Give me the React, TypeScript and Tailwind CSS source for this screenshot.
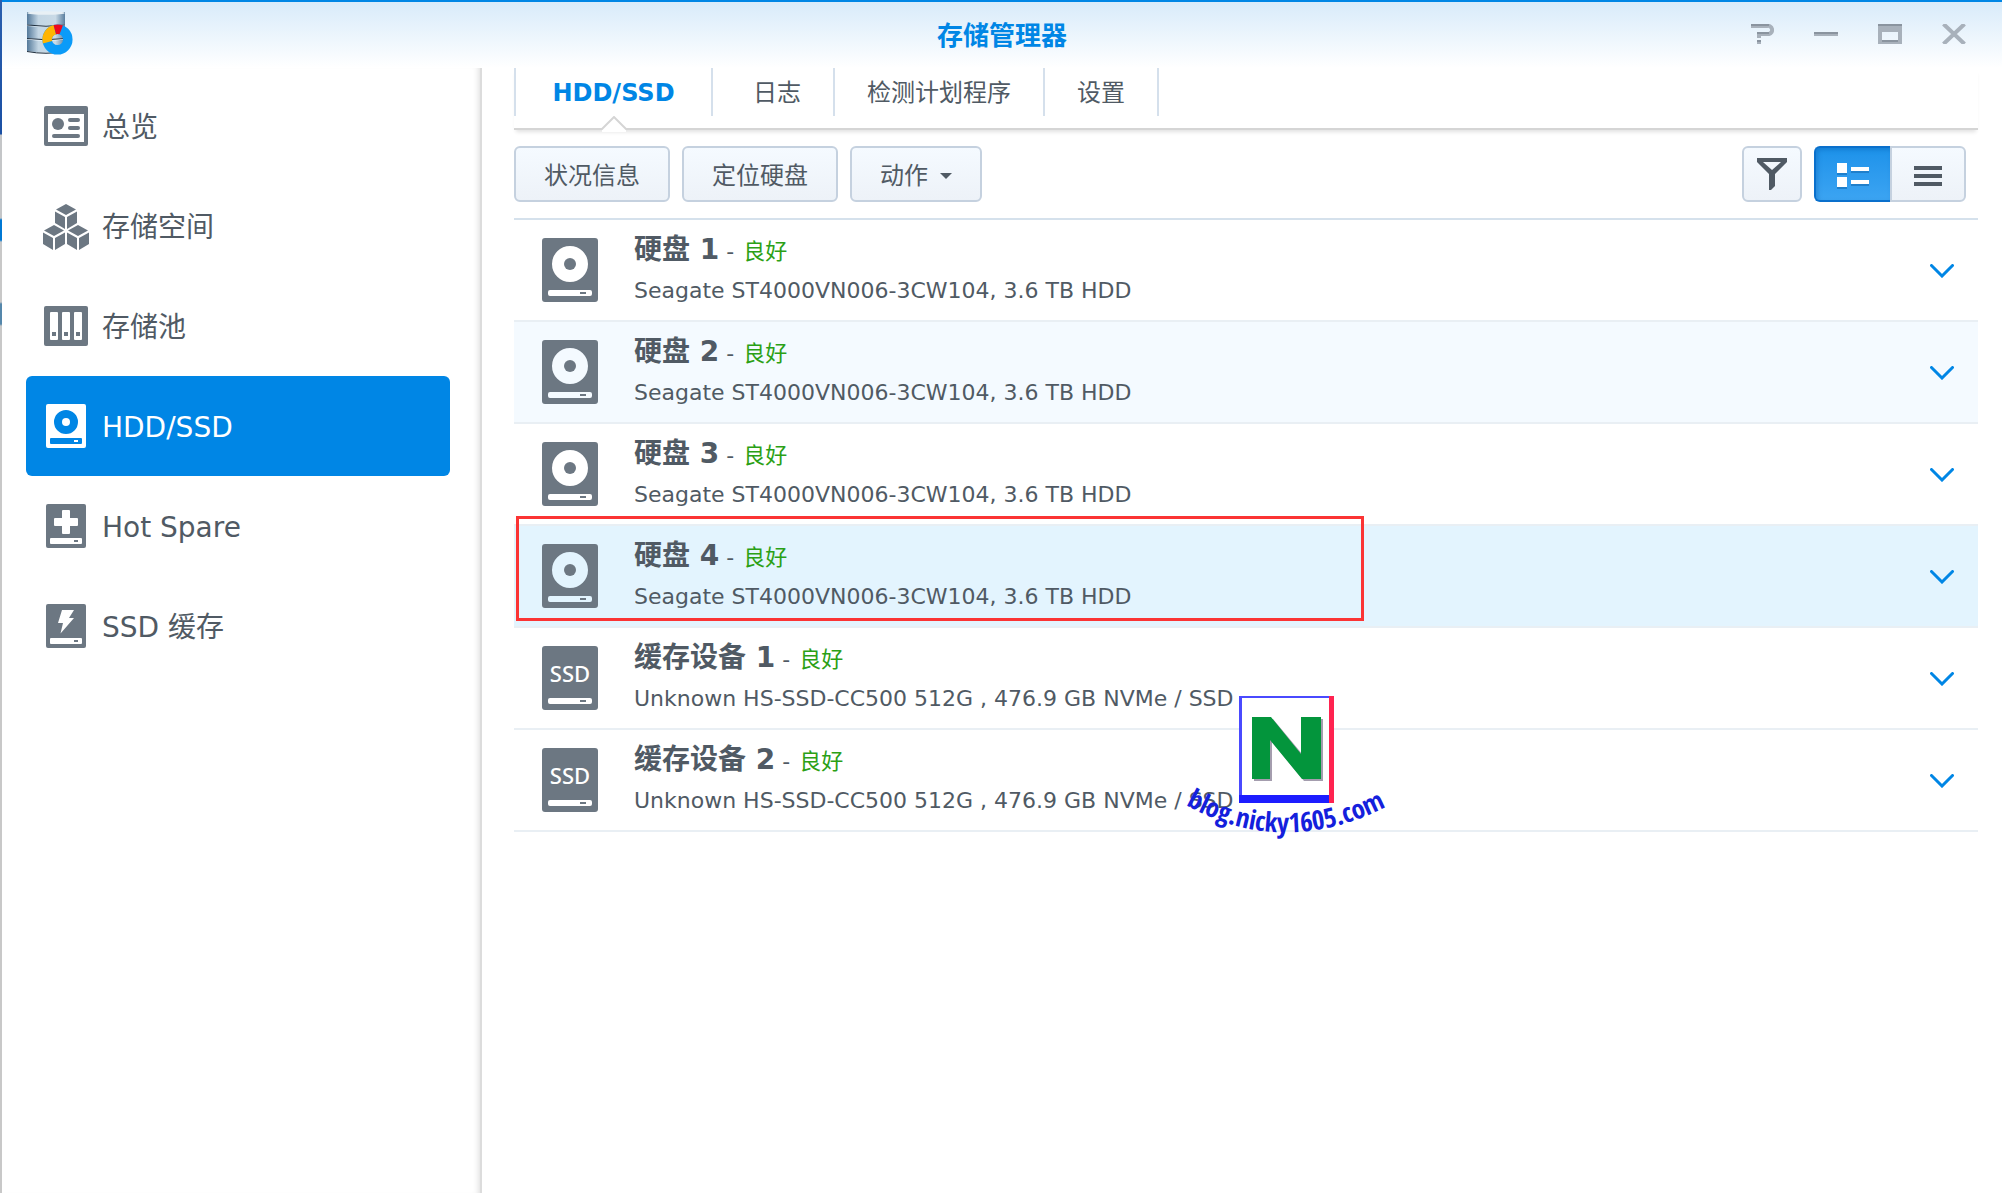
import React from "react";
import clsx from "clsx";

type IconProps = { className?: string };

function OverviewIcon() {
     return (
          <svg width="44" height="40" viewBox="0 0 44 40" fill="currentColor" aria-hidden="true">
               <path
                    fillRule="evenodd"
                    d="M2 0H42a2 2 0 0 1 2 2V38a2 2 0 0 1-2 2H2a2 2 0 0 1-2-2V2a2 2 0 0 1 2-2ZM4 8V36H40V8Z"
               />
               <circle cx="14" cy="18" r="6" />
               <rect x="24" y="12" width="12" height="4" rx="2" />
               <rect x="24" y="20" width="12" height="4" rx="2" />
               <rect x="8" y="28" width="28" height="4" rx="2" />
          </svg>
     );
}

const cube = "M11 0 21 5.5 11 11 1 5.5ZM0 7.5 10 13V25L0 19ZM12 13 22 7.5V19L12 25Z";

function VolumeIcon() {
     return (
          <svg width="46" height="48" viewBox="0 -2 46 48" className="shrink-0" fill="currentColor" aria-hidden="true">
               <path d={cube} transform="translate(12 0)" />
               <path d={cube} transform="translate(0 21)" />
               <path d={cube} transform="translate(24 21)" />
          </svg>
     );
}

function PoolIcon() {
     return (
          <svg width="44" height="40" viewBox="0 0 44 40" fill="currentColor" aria-hidden="true">
               <rect width="44" height="40" rx="2" />
               {[6, 18, 30].map((x) => (
                    <g key={x}>
                         <rect x={x} y="6" width="8" height="28" rx="1" fill="#fff" />
                         <rect x={x + 2} y="26" width="4" height="4" />
                    </g>
               ))}
          </svg>
     );
}

function SmallDiskIcon({ children }: { children?: React.ReactNode }) {
     return (
          <svg width="40" height="44" viewBox="0 0 40 44" aria-hidden="true">
               <rect width="40" height="44" rx="2" fill="currentColor" />
               <g fill="#fff">
                    {children}
                    <rect x="4" y="34" width="32" height="6" rx="1" />
               </g>
               <rect x="28" y="36" width="4" height="2" fill="currentColor" />
          </svg>
     );
}

function HddIcon() {
     return (
          <svg width="40" height="44" viewBox="0 0 40 44" fill="currentColor" aria-hidden="true">
               <path
                    fillRule="evenodd"
                    d="M2 0H38a2 2 0 0 1 2 2V42a2 2 0 0 1-2 2H2a2 2 0 0 1-2-2V2a2 2 0 0 1 2-2ZM20 6a12 12 0 1 0 0 24a12 12 0 1 0 0-24ZM5 34a1 1 0 0 0-1 1v4a1 1 0 0 0 1 1h30a1 1 0 0 0 1-1v-4a1 1 0 0 0-1-1Z"
               />
               <circle cx="20" cy="18" r="4" />
               <rect x="28" y="36" width="4" height="2" />
          </svg>
     );
}

function HotSpareIcon() {
     return (
          <SmallDiskIcon>
               <path d="M17 6h6a1 1 0 0 1 1 1v7h7a1 1 0 0 1 1 1v6a1 1 0 0 1-1 1h-7v7a1 1 0 0 1-1 1h-6a1 1 0 0 1-1-1v-7H9a1 1 0 0 1-1-1v-6a1 1 0 0 1 1-1h7V7a1 1 0 0 1 1-1Z" />
          </SmallDiskIcon>
     );
}

function SsdCacheIcon() {
     return (
          <SmallDiskIcon>
               <path d="M16 6H28L23 14H28L14.5 29.5L17 19H12Z" />
          </SmallDiskIcon>
     );
}

function DriveIcon({ type }: { type: string }) {
     return (
          <svg width="56" height="64" viewBox="0 0 56 64" className="shrink-0 text-[#6c7782]" fill="currentColor" aria-hidden="true">
               {type === "hdd" ? (
                    <>
                         <path
                              fillRule="evenodd"
                              d="M3 0H53a3 3 0 0 1 3 3V61a3 3 0 0 1-3 3H3a3 3 0 0 1-3-3V3a3 3 0 0 1 3-3ZM28 8a18 18 0 1 0 0 36a18 18 0 1 0 0-36ZM8 52a2 2 0 0 0-2 2v2a2 2 0 0 0 2 2h40a2 2 0 0 0 2-2v-2a2 2 0 0 0-2-2Z"
                         />
                         <circle cx="28" cy="26" r="6" />
                    </>
               ) : (
                    <>
                         <rect width="56" height="64" rx="3" />
                         <text x="28" y="36" textAnchor="middle" fill="#fff" className="font-['Noto_Sans',sans-serif] text-[22px] font-medium">
                              SSD
                         </text>
                         <rect x="6" y="52" width="44" height="6" rx="2" fill="#fff" />
                    </>
               )}
               <rect x="38" y="54" width="6" height="2" />
          </svg>
     );
}

function AppLogo() {
     return (
          <svg width="48" height="46" viewBox="0 0 48 46" aria-hidden="true">
               <defs>
                    <linearGradient id="metal" x1="0" x2="1" y1="0" y2="0">
                         <stop offset="0" stopColor="#54799a" />
                         <stop offset="0.3" stopColor="#c3d6e4" />
                         <stop offset="0.75" stopColor="#c9dae6" />
                         <stop offset="1" stopColor="#5b7f9f" />
                    </linearGradient>
               </defs>
               <path d="M1 1V13.5Q20 16 39 13.5V1Z" fill="url(#metal)" />
               <path d="M1 15V27Q20 29.5 39 27V15Q20 17 1 15Z" fill="url(#metal)" />
               <path d="M1 28.5V40Q20 43.5 39 40V28.5Q20 31 1 28.5Z" fill="url(#metal)" />
               <path d="M1 14Q20 16.5 39 14M1 27.5Q20 30 39 27.5M1 40.5Q20 44 39 40.5" fill="none" stroke="#1f2f3e" />
               <ellipse cx="20" cy="2" rx="19" ry="1.8" fill="#e8f0f5" />
               {/* Usage ring, with the cylinder showing through its middle */}
               <g fill="none" strokeWidth="9.5">
                    <circle cx="31.5" cy="28.5" r="10.3" stroke="#0b9bf8" />
                    <path d="M21.5 31.2A10.3 10.3 0 0 1 28.8 18.6" stroke="#ffb400" />
                    <path d="M28.8 18.6A10.3 10.3 0 0 1 35.2 18.9" stroke="#ee0a1e" />
               </g>
          </svg>
     );
}

function FilterIcon() {
     return (
          <svg width="30" height="32" viewBox="0 0 30 32" fill="#505a64" aria-hidden="true">
               <path fillRule="evenodd" d="M0 0H30V4L18 16V28L14 32H12V16L0 4ZM6 4 15 12 24 4Z" />
          </svg>
     );
}

function DetailIcon() {
     return (
          <svg width="32" height="26" viewBox="0 0 32 26" aria-hidden="true">
               <path d="M0 2h10v10H0ZM0 16h10v10H0ZM14 6h18v4H14ZM14 19h18v4H14Z" fill="#1f7fcb" />
               <path d="M0 0h10v10H0ZM0 14h10v10H0ZM14 4h18v4H14ZM14 17h18v4H14Z" fill="#fff" />
          </svg>
     );
}

function ListIcon() {
     return (
          <svg width="28" height="20" viewBox="0 0 28 20" fill="#505a64" aria-hidden="true">
               <path d="M0 0h28v4H0ZM0 8h28v4H0ZM0 16h28v4H0Z" />
          </svg>
     );
}

function ChevronIcon({ className }: IconProps) {
     return (
          <svg width="24" height="14" viewBox="0 0 24 14" className={className} aria-hidden="true">
               <path d="M1.5 1.5 12 12 22.5 1.5" fill="none" stroke="#0086e5" strokeWidth="3" strokeLinecap="round" />
          </svg>
     );
}

// Each glyph is drawn twice: the light body, then a dark top edge
const windowControls = [
     { label: "帮助", d: "M1 2H17A4 4 0 0 1 19 10H9V14M9 16v4", dark: "M1 1H19M7 9H19M7 17H11" },
     { label: "最小化", d: "M0 10H24", dark: "M0 9H24" },
     { label: "最大化", d: "M2 2V18H22V2ZM0 6H24", dark: "M0 1H24M4 17H20" },
     { label: "关闭", d: "M1.5 0 22.5 20M22.5 0 1.5 20", dark: "" },
];

const navItems = [
     { name: "总览", Icon: OverviewIcon },
     { name: "存储空间", Icon: VolumeIcon },
     { name: "存储池", Icon: PoolIcon },
     { name: "HDD/SSD", Icon: HddIcon, active: true },
     { name: "Hot Spare", Icon: HotSpareIcon },
     { name: "SSD 缓存", Icon: SsdCacheIcon },
];

const tabs = ["日志", "检测计划程序", "设置"];

const disks = [
     { name: "硬盘 1", type: "hdd", model: "Seagate ST4000VN006-3CW104, 3.6 TB HDD" },
     { name: "硬盘 2", type: "hdd", model: "Seagate ST4000VN006-3CW104, 3.6 TB HDD", striped: true },
     { name: "硬盘 3", type: "hdd", model: "Seagate ST4000VN006-3CW104, 3.6 TB HDD" },
     { name: "硬盘 4", type: "hdd", model: "Seagate ST4000VN006-3CW104, 3.6 TB HDD", selected: true },
     { name: "缓存设备 1", type: "ssd", model: "Unknown HS-SSD-CC500 512G , 476.9 GB NVMe / SSD" },
     { name: "缓存设备 2", type: "ssd", model: "Unknown HS-SSD-CC500 512G , 476.9 GB NVMe / SSD" },
];

const buttonClass =
     "flex h-14 items-center justify-center rounded-md border-2 border-[#c5d1df] bg-linear-to-b from-[#f5faff] to-[#edf2f8]";

function Watermark() {
     return (
          <svg
               width="204"
               height="156"
               viewBox="0 0 204 156"
               className="pointer-events-none absolute top-[476px] left-[670px]"
               role="img"
               aria-label="blog.nicky1605.com"
          >
               <rect x="55" y="0" width="95" height="107" fill="#fff" />
               <path d="M55 1H145" stroke="#4a4aff" strokeWidth="2" />
               <path d="M56.5 0V107" stroke="#4a4aff" strokeWidth="3" />
               <rect x="55" y="99" width="90" height="8" fill="#1c1cff" />
               <rect x="145" y="0" width="5" height="107" fill="#ff2350" />
               <path d="M70 23H89L119 59V23H139V85H120L88 46V85H70Z" fill="#a49dae" />
               <path d="M68 21H87L117 58V21H137V83H118L86 44V83H68Z" fill="#03953c" />
               <path id="arc" d="M0 108Q98 164 204 110" fill="none" />
               <text fill="#1420dc" className="font-['Open_Sans_Condensed','Roboto_Condensed','Liberation_Sans_Narrow','Open_Sans',sans-serif] text-[27px] font-bold">
                    <textPath href="#arc" startOffset="50%" textAnchor="middle">
                         blog.nicky1605.com
                    </textPath>
               </text>
          </svg>
     );
}

export default function App() {
     return (
          <div className="flex min-h-screen bg-white font-['DejaVu_Sans','Noto_Sans_CJK_SC',sans-serif] text-[#505a64]">
               {/* Desktop edge */}
               <div className="w-0.5 shrink-0 bg-[linear-gradient(to_bottom,#2a5fae_0,#1b50a4_134px,#c4c6c8_135px,#c4c6c8_218px,#0078d4_220px,#0078d4_240px,#c8c8c8_242px,#c8c8c8_302px,#5587ab_304px,#5587ab_324px,#c8c8c8_326px)]" />

               <div className="flex min-w-0 grow flex-col border-t-2 border-[#0086e5]">
                    {/* Title bar */}
                    <header className="grid h-[66px] shrink-0 grid-cols-[1fr_auto_1fr] items-center bg-linear-to-b from-[#d8ebfa] to-white">
                         <div className="pb-0.5 pl-6">
                              <AppLogo />
                         </div>
                         <h1 className="pt-0.5 text-[26px] leading-8 font-bold text-[#0086e5]">存储管理器</h1>
                         <div className="flex justify-end gap-4 pr-6">
                              {windowControls.map((control) => (
                                   <button
                                        key={control.label}
                                        type="button"
                                        aria-label={control.label}
                                        className="flex h-12 w-12 items-center justify-center pb-0.5"
                                   >
                                        <svg width="24" height="20" viewBox="0 0 24 20" fill="none">
                                             <path d={control.d} stroke="#a8b1bb" strokeWidth="4" />
                                             <path d={control.dark} stroke="#8a949f" strokeWidth="2" />
                                        </svg>
                                   </button>
                              ))}
                         </div>
                    </header>

                    <div className="flex grow">
                         {/* Sidebar */}
                         <nav className="w-[480px] shrink-0 border-r-2 border-[#dcdcdc] pt-2 pr-[30px] pl-6 shadow-[inset_-6px_0_6px_-5px_rgba(0,0,0,0.15)]">
                              {navItems.map(({ name, Icon, active }) => (
                                   <a
                                        key={name}
                                        href="#"
                                        className={clsx(
                                             "flex h-[100px] items-center gap-3.5 rounded-md pl-[18px] text-[28px]",
                                             active && "bg-[#0086e5] text-white",
                                        )}
                                   >
                                        <span className={clsx("flex w-11 shrink-0 justify-center", !active && "text-[#6c7782]")}>
                                             <Icon />
                                        </span>
                                        <span className="pt-1">{name}</span>
                                   </a>
                              ))}
                         </nav>

                         <main className="min-w-0 grow pr-6 pl-8">
                              {/* Tabs */}
                              <div className="flex h-[62px] border-b-2 border-[#d5d5d5] pb-3 text-2xl shadow-[0_4px_4px_-2px_rgba(0,0,0,0.12)]">
                                   <button
                                        type="button"
                                        className="relative h-12 min-w-[199px] border-x-2 border-[#d5e0ec] px-8 pt-0.5 font-bold text-[#0086e5]"
                                   >
                                        HDD/SSD
                                        <svg width="28" height="16" viewBox="0 0 28 16" className="absolute top-full left-1/2 -translate-x-1/2" aria-hidden="true">
                                             <path d="M2 13 14 1 26 13V16H2Z" fill="#fff" />
                                             <path d="M0 13H2L14 1 26 13H28" fill="none" stroke="#d5d5d5" strokeWidth="2" />
                                        </svg>
                                   </button>
                                   {tabs.map((tab) => (
                                        <button
                                             key={tab}
                                             type="button"
                                             className="h-12 border-r-2 border-[#d5e0ec] px-8 pt-0.5 nth-2:pl-10"
                                        >
                                             {tab}
                                        </button>
                                   ))}
                              </div>

                              {/* Toolbar */}
                              <div className="flex items-center gap-3 border-b-2 border-[#d5e1ec] py-4 pr-3 text-2xl">
                                   <button type="button" className={clsx(buttonClass, "px-7 pt-1")}>
                                        状况信息
                                   </button>
                                   <button type="button" className={clsx(buttonClass, "px-7 pt-1")}>
                                        定位硬盘
                                   </button>
                                   <button type="button" className={clsx(buttonClass, "gap-3 px-7 pt-1")}>
                                        动作
                                        <svg width="12" height="6" viewBox="0 0 12 6" fill="#505a64" aria-hidden="true">
                                             <path d="M0 0H12L6 6Z" />
                                        </svg>
                                   </button>
                                   <button type="button" aria-label="筛选" className={clsx(buttonClass, "ml-auto w-[60px]")}>
                                        <FilterIcon />
                                   </button>
                                   <div className="flex">
                                        <button
                                             type="button"
                                             aria-label="详细视图"
                                             className="flex h-14 w-[76px] items-center justify-center rounded-l-md border-2 border-r-0 border-[#0a70cc] bg-linear-to-b from-[#1c92ea] to-[#3ba4f2] pt-1 shadow-[inset_2px_2px_4px_rgba(0,80,160,0.3)]"
                                        >
                                             <DetailIcon />
                                        </button>
                                        <button type="button" aria-label="列表视图" className={clsx(buttonClass, "w-[76px] rounded-l-none pt-1")}>
                                             <ListIcon />
                                        </button>
                                   </div>
                              </div>

                              {/* Drives */}
                              <div className="relative">
                                   <ul>
                                        {disks.map((disk) => (
                                             <li
                                                  key={disk.name}
                                                  className={clsx(
                                                       "relative flex h-[102px] items-center border-b-2 border-[#e9eff4] pr-6 pl-7",
                                                       disk.striped && "bg-[#f4faff]",
                                                       disk.selected && "bg-[#e3f4fe]",
                                                  )}
                                             >
                                                  <DriveIcon type={disk.type} />
                                                  <div className="ml-9 grow text-[22px] whitespace-nowrap">
                                                       <div className="leading-10">
                                                            <strong className="text-[28px]">{disk.name}</strong> -{" "}
                                                            <span className="ml-0.5 text-[#2ba015]">良好</span>
                                                       </div>
                                                       <div className="leading-[38px]">{disk.model}</div>
                                                  </div>
                                                  <button type="button" aria-label={`展开 ${disk.name}`} className="pt-0.5">
                                                       <ChevronIcon />
                                                  </button>
                                                  {disk.selected && (
                                                       <div className="pointer-events-none absolute -top-2.5 left-0.5 h-[105px] w-[848px] border-3 border-[#fb3434]" />
                                                  )}
                                             </li>
                                        ))}
                                   </ul>
                                   <Watermark />
                              </div>
                         </main>
                    </div>
               </div>
          </div>
     );
}
